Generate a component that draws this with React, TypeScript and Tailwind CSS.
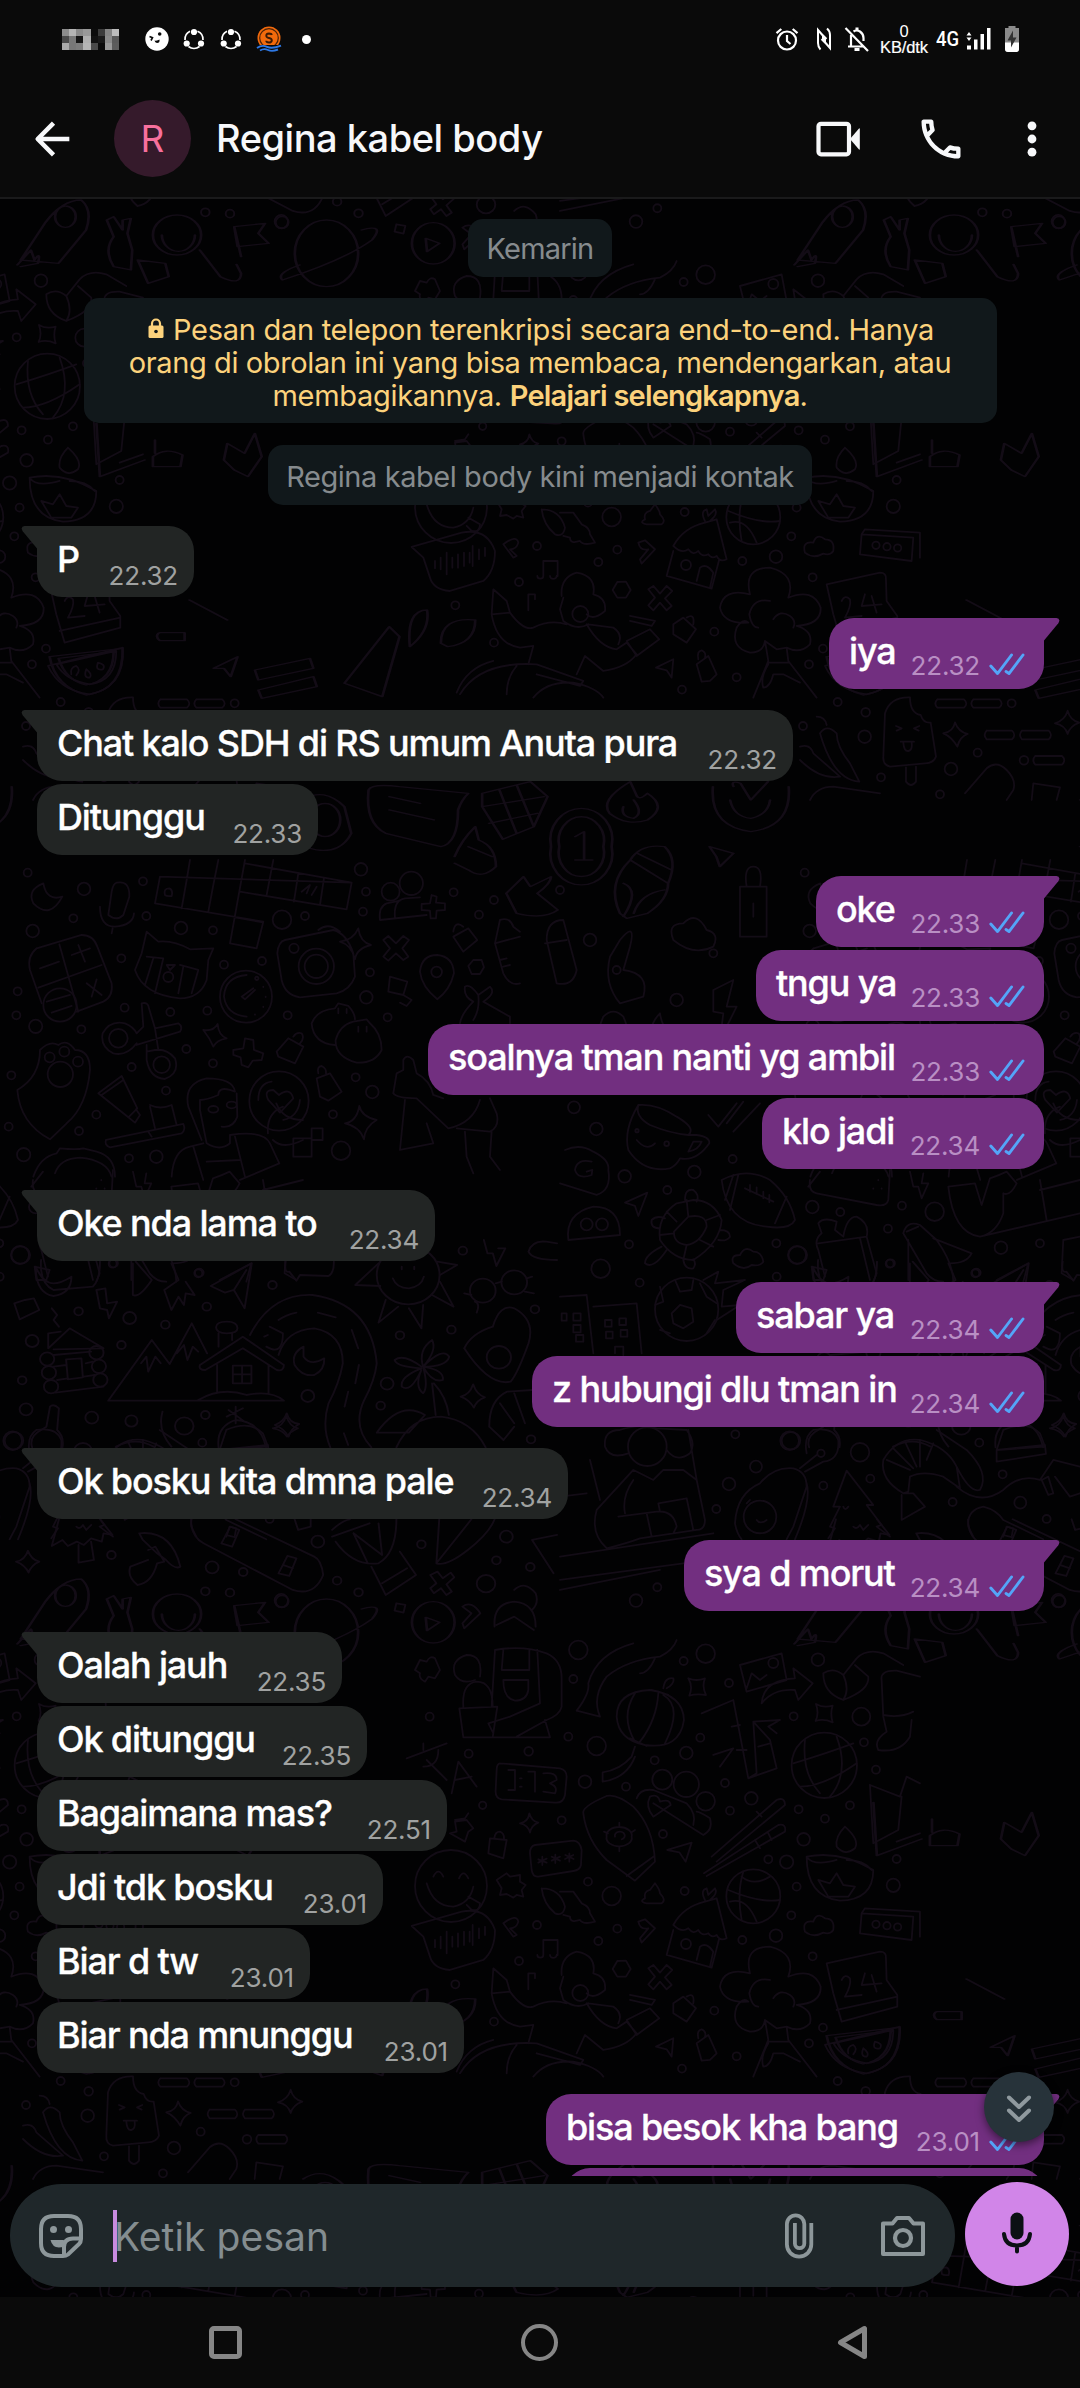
import type { ReactNode } from "react";

type Msg = { text: string; time: string; out?: boolean; tail?: boolean; width: string };

const messages: Msg[] = [
  { text: "P", time: "22.32", tail: true, width: "w-[157px]" },
  { text: "iya", time: "22.32", out: true, tail: true, width: "w-[215px]" },
  { text: "Chat kalo SDH di RS umum Anuta pura", time: "22.32", tail: true, width: "w-[756px]" },
  { text: "Ditunggu", time: "22.33", width: "w-[281px]" },
  { text: "oke", time: "22.33", out: true, tail: true, width: "w-[228px]" },
  { text: "tngu ya", time: "22.33", out: true, width: "w-[288px]" },
  { text: "soalnya tman nanti yg ambil", time: "22.33", out: true, width: "w-[616px]" },
  { text: "klo jadi", time: "22.34", out: true, width: "w-[282px]" },
  { text: "Oke nda lama to", time: "22.34", tail: true, width: "w-[398px]" },
  { text: "sabar ya", time: "22.34", out: true, tail: true, width: "w-[308px]" },
  { text: "z hubungi dlu tman in", time: "22.34", out: true, width: "w-[512px]" },
  { text: "Ok bosku kita dmna pale", time: "22.34", tail: true, width: "w-[531px]" },
  { text: "sya d morut", time: "22.34", out: true, tail: true, width: "w-[360px]" },
  { text: "Oalah jauh", time: "22.35", tail: true, width: "w-[305px]" },
  { text: "Ok ditunggu", time: "22.35", width: "w-[330px]" },
  { text: "Bagaimana mas?", time: "22.51", width: "w-[410px]" },
  { text: "Jdi tdk bosku", time: "23.01", width: "w-[346px]" },
  { text: "Biar d tw", time: "23.01", width: "w-[273px]" },
  { text: "Biar nda mnunggu", time: "23.01", width: "w-[427px]" },
  { text: "bisa besok kha bang", time: "23.01", out: true, tail: true, width: "w-[498px]" },
  { text: "", time: "", out: true, width: "w-[479px]" },
];

/* ---------- wallpaper ---------- */

const Dots = ({ list }: { list: number[][] }) => (
  <>
    {list.map(([x, y, r], i) => (
      <circle key={i} cx={x} cy={y} r={r} />
    ))}
  </>
);

const Paths = ({ list }: { list: string[] }) => (
  <>
    {list.map((d, i) => (
      <path key={i} d={d} />
    ))}
  </>
);

function Doodles() {
  return (
    <g id="doodles" fill="none" stroke="#130c16" strokeWidth="5.500" strokeLinecap="round" strokeLinejoin="round">
      <g transform="translate(400 1640) scale(.3333)">
        <Dots
          list={[
            [535, 30, 28], [520, 117, 12], [505, 290, 12], [590, 318, 28], [555, 425, 19], [678, 440, 12], [386, 334, 13], [206, 341, 12],
            [89, 230, 12], [851, 63, 12], [917, 41, 28], [987, 129, 12], [901, 293, 12], [859, 339, 19], [764, 361, 12], [975, 429, 12],
            [1054, 475, 19], [990, 512, 12], [789, 582, 12], [1254, 59, 19], [1181, 229, 12], [1384, 230, 27], [1392, 307, 12], [1428, 389, 12],
            [1275, 536, 12], [1350, 496, 12], [1196, 508, 12], [1211, 598, 19], [1105, 658, 12], [1160, 666, 20], [1190, 740, 12], [1490, 657, 12],
            [1480, 736, 20], [485, 541, 12], [248, 496, 11], [564, 725, 12], [635, 768, 28], [411, 855, 12], [652, 866, 12], [595, 903, 12],
            [357, 963, 12], [166, 1033, 12], [282, 1145, 12], [854, 753, 12], [1174, 826, 12], [1128, 887, 19], [1027, 900, 12], [1238, 949, 12],
            [1269, 1163, 12], [943, 1112, 12], [1010, 1249, 12], [846, 1286, 12], [1227, 1210, 12],
            [153, 738, 108], [787, 419, 30], [859, 433, 38], [917, 484, 28], [1273, 376, 98], [1060, 769, 81], [858, 912, 15],
            [1428, 853, 11], [1461, 857, 11], [1493, 861, 11], [1120, 69, 15], [541, 1059, 24],
          ]}
        />
        <Paths
          list={[
            "M275 200L285 30Q370 15 440 40Q485 60 485 115V200Q480 225 440 240L350 290M178 205L292 200L278 292H190ZM190 292H450L435 240M310 30L305 90H388V30M412 30L420 190L330 230L265 250L280 280M310 120H385V150Q380 182 345 182Q310 175 310 120M190 200Q185 130 230 125Q278 125 278 200M240 110Q250 45 200 45Q150 60 165 105Q185 135 225 120",
            "M530 212Q570 160 565 130Q590 40 700 10M530 212L600 230Q575 170 620 110Q680 60 780 50Q820 30 830 0M720 100Q745 100 765 55",
            "M750 150Q650 155 650 230Q655 300 735 315Q840 330 852 240Q850 165 750 150ZM705 160Q660 230 705 305M775 160Q770 240 720 305M790 165Q850 200 795 310M755 150L805 165M690 295L740 318M705 320L695 350Q660 390 608 397V425Q680 415 705 350M790 145Q795 110 820 115Q825 130 800 145",
            "M300 370L480 385Q500 390 500 410L495 465Q490 490 465 488L305 478Q285 475 287 450L290 390Q290 372 300 370M325 390L345 390V450H325M360 415h5M360 440h5M385 395H405V455M430 400Q470 395 470 420L450 430Q475 440 465 460L430 455",
            "M20 355L140 310M70 310V330M115 330Q115 380 70 380M80 360L140 420M155 460L175 365L230 440M165 420L215 410",
            "M620 468Q545 500 550 520Q560 600 620 660L705 722L765 665Q760 560 700 500Q650 460 620 468M680 708L760 650M620 590a38 25 0 1 0 75 0a38 25 0 1 0 -75 0M645 590a15 12 0 1 1 20 8M658 548v12M658 622v12M612 575l12 5M705 570l-12 8",
            "M405 615L520 602Q540 603 545 630L543 675Q540 690 520 693L415 710Q398 712 395 690L390 640Q390 618 405 615M427 650v25M415 658l25 10M440 656l-25 12M466 644v25M455 650l25 12M480 650l-25 12M508 640v25M496 645l25 12M520 645l-25 12",
            "M710 475Q720 445 760 450L860 490Q890 520 880 555M760 490L910 585Q940 570 930 535Q900 515 890 515M750 470Q775 460 780 485Q810 475 812 495L760 530Q735 500 750 470",
            "M802 630L875 608L857 665L838 637Z",
            "M935 650L1130 480Q1155 470 1155 495L950 665M912 700L1135 555Q1160 550 1155 575L920 708M1070 515L1085 530M1065 600L1080 625M1105 580L1115 600",
            "M905 220L1000 180L1045 415L1070 400L1060 245L1110 300L1130 385L1045 415M1060 245L1140 240L1105 260L1130 280M940 345L1000 325L960 380M995 260L1020 255M1010 330H1040M1075 320L1110 310",
            "M1020 75L1145 40L1160 120L1040 155ZM1040 145L1055 100L1080 120L1100 105M1085 190Q1090 120 1185 115L1180 85L1238 130L1195 180L1185 150Q1120 145 1085 190",
            "M1270 100Q1300 80 1330 105L1370 55Q1400 25 1450 40L1510 75M1330 105Q1350 150 1330 180Q1270 160 1270 100M1365 75L1405 110Q1410 150 1330 180",
            "M865 115Q890 125 915 115Q905 140 918 165Q890 160 868 167Q880 140 865 115M1248 192Q1270 205 1298 197Q1290 220 1298 247Q1270 235 1247 243Q1258 220 1248 192",
            "M1180 370Q1280 340 1360 310M1200 440Q1270 440 1370 370M1215 300Q1205 400 1260 460M1310 290Q1350 400 1290 470",
            "M1220 650Q1320 630 1420 690Q1420 780 1320 782Q1220 770 1220 650ZM1220 650Q1240 680 1310 660M1340 660Q1390 660 1415 690M1255 720L1290 730L1310 700L1330 735L1365 740L1345 770H1285ZM1335 560Q1380 600 1365 625Q1335 650 1310 620Q1305 590 1335 560",
            "M985 750Q1080 790 1140 780M1030 695Q1010 760 1025 840M1025 710Q1060 740 1110 710M990 785Q1040 770 1070 845",
            "M820 855Q850 800 915 785L950 775L980 895Q960 905 950 885Q935 895 925 880Q905 890 895 870Q880 885 865 865Q845 880 820 855M820 870L800 945L935 983L958 895M890 960L900 920Q920 905 940 935L930 980M915 780Q900 750 920 745L925 765L945 745Q955 760 930 780",
            "M1050 1000Q1030 920 1110 920Q1190 940 1165 1010Q1240 980 1262 1040Q1265 1090 1190 1095Q1240 1110 1230 1150Q1200 1180 1160 1160L1130 1165L1095 1140Q1090 1175 1050 1175Q990 1160 1010 1100Q1030 1070 1045 1085Q970 1090 960 1040Q970 980 1050 1000M1110 1020Q1060 1010 1048 1060Q1055 1100 1075 1100M1120 1075Q1140 1045 1170 1065Q1190 1080 1180 1100M1095 1140L1105 1200L1060 1310M1160 1160L1165 1200L1250 1310M1105 1205H1165M1105 1210Q1080 1250 1090 1280Q1110 1280 1120 1240L1150 1240L1200 1265",
            "M1280 970L1440 935Q1460 935 1458 955L1460 1020L1492 1065V1100L1325 1145L1300 1060ZM1310 1110L1492 1070M1325 1020Q1335 1000 1350 1015Q1355 1035 1335 1070L1385 1065M1395 1000L1385 1035L1445 1030M1415 1005L1430 1055",
            "M1275 1215L1500 1160Q1505 1280 1400 1300Q1310 1290 1275 1215M1300 1210L1480 1170Q1480 1260 1400 1270Q1330 1260 1300 1210M1345 1240Q1340 1220 1360 1215Q1375 1225 1360 1243M1390 1225Q1380 1250 1400 1250Q1410 1240 1390 1225M1425 1205Q1415 1230 1440 1225Q1450 1210 1425 1205",
            "M1385 820L1540 830L1535 900L1380 880ZM1385 820L1395 805L1560 815V890",
            "M1215 875Q1205 840 1240 845Q1250 815 1275 835Q1305 835 1300 870Q1290 885 1270 878Q1240 895 1215 875",
            "M425 745Q480 745 495 800Q490 830 465 820Q430 790 425 745M480 755L520 755L545 790Q570 800 570 820L585 845Q550 855 540 840Q510 850 510 830L490 825",
            "M735 775Q730 755 750 750L765 730Q780 750 780 760Q800 780 785 790H740Q715 785 735 775",
            "M745 985L760 975L780 998L800 975L817 990L795 1012L815 1035L800 1048L780 1025L760 1048L745 1033L765 1010ZM652 963L678 962L692 987L678 1010H652L638 987Z",
            "M290 720L320 700L330 710L360 705V725L377 735L365 750L370 770L350 765L340 773L320 762L300 765L305 745Z",
            "M35 858L185 815Q260 800 285 870Q285 930 250 960L150 990Q100 985 90 950L70 890ZM105 900v22M122 890v35M140 875v65M157 890v30M174 880v40M192 875v40M209 875v30M218 855v60M237 865v30M255 860v25M80 730Q100 800 160 800Q210 790 220 740M100 710Q115 680 130 710M177 715Q190 685 205 715M205 770L240 790Q240 815 215 810L200 795",
            "M310 850Q350 820 355 845Q350 865 330 865L350 885L340 890ZM715 845L735 838L765 865L725 908L720 895L745 865Q720 870 715 845M430 945V900H473V945M412 945a9 8 0 1 0 18 0M450 945a9 8 0 1 0 20 0M385 1048V1000H405V1015",
            "M275 1060L280 985L320 1020L330 1055ZM275 1060Q290 1150 360 1160L400 1155L385 1210M330 1055Q370 1110 400 1100Q450 1075 500 1090M485 1005Q480 950 530 935Q590 945 580 1000Q620 1010 615 1050Q580 1080 560 1060M490 1010L480 1045L490 1080Q530 1110 565 1090M560 1090Q600 1160 650 1165L680 1145L710 1180Q680 1220 610 1230L555 1185L530 1240M565 1090L640 1100Q670 1120 655 1150M690 1065L765 1080L755 1095L690 1080M680 1140L750 1105L778 1135L710 1185Z",
            "M180 1300Q240 1200 410 1210L550 1260L540 1275L410 1240M400 1310Q440 1260 520 1265Q590 1280 610 1310M320 1300Q320 1250 350 1215M170 1295Q200 1220 280 1200",
            "M820 1090L850 1070L888 1105L860 1145L820 1120ZM860 1070Q885 1055 880 1090M890 1210L925 1185L950 1240L930 1260L905 1262ZM895 1195Q890 1170 905 1168Q920 1175 915 1190M768 1220L820 1195L815 1250L800 1228Z",
            "M165 540L195 535L205 520M150 580L170 575L165 545L200 540L220 565L205 575L195 605ZM270 595L320 600L310 655L265 640ZM283 595Q285 575 300 575Q313 580 312 597M360 550Q385 545 388 520Q395 545 415 548Q395 555 390 578Q385 555 360 550",
            "M45 90L60 60L80 65Q90 45 105 55L120 90L105 115L85 110L75 125Q55 115 60 100ZM1445 120Q1440 90 1490 92L1560 110M1445 120L1450 230L1460 275Q1420 300 1435 330Q1500 340 1530 290L1535 240M1450 225Q1500 235 1540 215",
            "M1410 435L1500 470L1520 410M1410 435L1420 610L1495 570L1505 470M1520 410L1560 430M1490 605L1560 580",
          ]}
        />
      </g>

      <g transform="translate(0 860) scale(.3333)">
        <Dots
          list={[
            [83, 38, 12], [252, 87, 19], [220, 175, 12], [98, 213, 19], [429, 64, 12], [439, 168, 12], [543, 204, 19], [639, 211, 12],
            [364, 295, 12], [672, 314, 12], [786, 303, 12], [846, 179, 28], [915, 168, 12], [1083, 28, 19], [1098, 95, 12], [1089, 155, 12],
            [1361, 97, 12], [1437, 164, 12], [1482, 120, 12], [1110, 337, 12], [1099, 412, 19], [1163, 472, 12], [53, 394, 12], [49, 466, 12],
            [107, 499, 20], [374, 443, 12], [511, 456, 12], [244, 508, 12], [622, 452, 12], [863, 466, 12], [559, 567, 12], [639, 610, 12],
            [395, 621, 12], [498, 692, 12], [289, 764, 12], [237, 813, 12], [34, 646, 12], [26, 800, 12], [71, 884, 20], [387, 895, 12],
            [469, 890, 19], [1067, 652, 12], [1117, 696, 19], [999, 763, 12], [1023, 872, 28], [1310, 336, 16],
            [180, 435, 50], [738, 410, 78], [949, 319, 53], [949, 319, 35], [882, 265, 14], [355, 535, 28], [485, 614, 25], [837, 723, 89],
            [181, 643, 38], [149, 592, 15], [193, 575, 15], [234, 605, 15], [1172, 95, 27], [1234, 70, 35], [505, 351, 15],
          ]}
        />
        <Paths
          list={[
            "M130 70Q80 90 100 130Q150 180 187 110Q140 125 130 70M350 68Q390 60 388 110L370 165Q350 185 325 165L335 95Q340 70 350 68M300 140Q300 200 345 200Q400 195 402 160M338 205L335 220",
            "M480 50L1055 68M480 50L465 130L790 185L770 265L690 250L735 0M560 60L545 145M640 75L625 155M570 0L560 60M655 0L640 75M735 10L1055 68L1040 148L720 95M820 0L800 105M895 40L882 125M972 55L960 135M705 172L788 187M495 105Q490 85 508 85Q520 90 515 108Q500 110 495 105M905 95L930 75L920 100M935 105L950 80",
            "M110 265L245 225Q280 225 292 260L335 370Q340 410 310 425L230 455M110 265Q80 290 90 330L125 430M178 253L235 455M115 383L305 315M120 325L177 305M215 285L270 265M235 255L255 305M260 370L305 405M290 358L275 410M140 425L210 405M155 458L215 438",
            "M440 215L475 245Q520 240 570 268L640 265L625 300L620 360Q600 415 540 415Q430 405 405 330L425 280ZM440 290L490 295L465 400M460 295L435 375M540 315L595 330L575 400M550 320L535 400M500 315L525 315L510 330Z",
            "M855 240L1000 210Q1040 220 1060 280L1065 350Q1050 390 1010 400L900 412Q855 405 845 360L832 280Q835 245 855 240M955 210Q985 185 1020 215M1020 245Q1060 240 1075 205Q1080 245 1113 255Q1070 265 1065 298Q1055 255 1020 245",
            "M1150 240L1165 228L1188 250L1210 228L1227 240L1207 265L1225 290L1210 300L1188 280L1165 302L1150 290L1170 265ZM1405 318L1420 300H1445L1452 322L1440 342H1415Z",
            "M1260 335Q1265 285 1312 285Q1360 290 1362 340Q1350 390 1312 418Q1265 380 1260 335M1170 350L1222 365L1210 405L1165 395ZM1210 405L1235 420L1220 438L1200 428M1360 230L1405 205L1432 240L1390 275ZM1360 215Q1365 180 1390 200",
            "M1140 180L1280 165M1185 175Q1180 120 1215 115L1260 112M1140 180Q1135 140 1160 130L1200 122M1295 105L1310 110L1308 128L1335 130V150L1310 152L1308 175H1292L1290 152L1265 150V132L1290 130Z",
            "M760 385L725 410L735 418L765 390M770 360a5 5 0 1 1 1 0M790 380v1M797 410v1M790 440v1M765 463v1M740 345Q675 350 672 410Q680 465 740 470",
            "M425 430Q445 425 447 445L465 505L535 490Q550 500 540 515L410 555M425 430L430 500L410 520M410 550Q380 590 340 580Q300 560 308 520Q330 480 375 490Q400 500 410 520M440 555L440 600Q450 655 495 657Q540 640 525 595Q500 565 465 570L440 575M465 505L475 570",
            "M610 510Q640 515 653 492Q655 525 680 535Q650 540 640 560Q630 535 610 510M700 570L730 565L735 535L760 540L762 570L790 580L785 600L758 602L745 622L725 615L722 592L700 585ZM830 575L865 535L910 560L885 610L835 590ZM880 530Q890 515 905 520Q915 535 900 550",
            "M1005 555Q940 550 935 490Q950 450 1005 445L1015 430L1045 438Q1065 460 1065 478M1060 485L1100 478L1110 490Q1145 520 1145 570Q1125 610 1070 608Q1005 590 1007 540Q1020 495 1060 485M1015 445v15M1040 447v12M1075 500v15M1100 500v15",
            "M150 838Q60 790 52 690Q120 650 120 570Q150 540 175 555Q200 535 225 570Q270 570 270 630Q260 740 200 790ZM295 700L365 648L412 745L385 772ZM305 705L370 660M385 772L405 788L420 765L408 748M318 840L550 792Q558 810 545 820L330 862Q312 855 318 840M445 815L455 830M450 735Q480 750 515 735L530 795M450 740L465 805",
            "M565 740Q550 670 620 655Q700 655 705 695L690 690Q655 680 655 705Q620 720 600 720V750L620 850Q660 875 690 850V825M565 740L605 840M625 748a15 10 0 1 0 30 0a15 10 0 1 0-30 0M680 735a15 10 0 1 0 30 0a15 10 0 1 0-30 0M710 700L712 770Q700 805 665 800M515 950Q520 870 570 860L610 850M690 825Q790 810 810 850L838 910L720 960M580 860L610 960M620 905L720 900M705 830L735 950",
            "M805 720Q790 690 820 690L837 705Q870 680 880 715L840 758ZM775 720Q775 670 815 665M900 720Q895 770 850 780M880 835H935V890H880ZM935 805H968V840H935ZM1035 790Q1070 785 1078 738Q1085 770 1130 780Q1095 800 1092 838Q1080 800 1035 790M950 655L990 640L1025 695L985 722L960 710ZM955 640Q950 620 965 618Q980 625 978 640",
            "M100 950Q120 890 170 880L180 865Q230 870 250 865L290 875Q345 890 345 950M165 940Q180 895 240 893Q320 900 335 950",
            "M1395 380Q1410 370 1435 405L1470 380Q1490 400 1450 425L1530 470V490M1435 405Q1440 450 1420 480M1395 380Q1390 410 1420 425Q1385 460 1380 490M1180 700L1190 640L1210 630V600Q1220 580 1240 600L1250 640Q1290 660 1300 705L1330 715M1180 700Q1190 715 1250 715L1345 805Q1420 790 1440 720M1215 720L1200 870L1300 850L1280 790M1370 805L1470 815Q1500 800 1490 760L1470 715M1395 815L1400 890L1420 940M1475 815L1470 890L1500 930",
            "M1485 250L1500 180Q1530 170 1540 200L1560 215M1485 250L1510 340Q1530 380 1560 370M1485 250L1560 230M1500 300L1520 295M1510 320L1530 315",
          ]}
        />
      </g>

      <g transform="translate(560 1100) scale(.3333)">
        <Dots
          list={[
            [109, 87, 19], [42, 22, 18], [194, 229, 19], [322, 270, 12], [403, 216, 19], [518, 177, 12], [207, 433, 12], [239, 548, 12],
            [122, 506, 28], [757, 321, 19], [841, 336, 12], [711, 465, 27], [649, 430, 12], [1026, 317, 12], [1124, 335, 28], [984, 386, 12],
            [989, 491, 12], [1323, 443, 19], [1440, 430, 12], [1246, 520, 12], [689, 1022, 28], [526, 1003, 12], [588, 1100, 18], [507, 1152, 19],
            [469, 1227, 12], [900, 1057, 28], [790, 1157, 12], [931, 1136, 12], [1178, 1206, 12], [1258, 1028, 12], [1328, 1123, 12], [1381, 1208, 18],
            [1460, 1257, 12], [228, 1502, 19], [292, 1462, 12], [1495, 1502, 20], [650, 530, 12],
            [380, 628, 95], [600, 1251, 49], [80, 373, 18], [126, 373, 18], [262, 1040, 58], [783, 1060, 11], [231, 92, 5], [320, 131, 7],
          ]}
        />
        <Paths
          list={[
            "M235 15Q290 10 350 50Q410 85 385 105Q330 100 270 75Q225 50 235 15M235 15Q190 90 205 150Q250 220 330 205Q350 195 360 175Q410 185 448 130Q450 110 410 105L385 105M385 155L400 125L425 125Q415 150 385 155M230 120Q260 155 285 130M445 45L475 80L530 10M500 70L550 5M520 95L600 10",
            "M15 150Q60 130 100 155Q150 180 145 210Q155 270 110 285L0 250M95 185Q50 175 45 210Q55 240 95 225L97 210L80 215",
            "M25 420Q15 340 100 320Q180 320 180 405ZM195 308L262 278L235 348L225 318Z",
            "M400 300Q460 300 485 360Q480 430 400 480Q340 480 300 420Q290 350 350 310ZM385 350Q440 340 440 380Q420 430 380 435Q340 430 342 395ZM380 300L385 350M440 360L480 345M420 420L460 440M380 435L370 480M342 400L300 405M350 365L320 335M375 300Q375 265 400 270Q420 285 410 305M300 385Q270 385 275 360Q290 345 315 355M320 450Q280 510 255 490Q255 465 305 440M370 480Q375 510 400 505Q410 490 400 478M480 390Q510 390 510 410Q500 425 475 420",
            "M485 240Q560 200 630 240Q690 290 705 360Q690 390 620 380Q500 370 485 240ZM510 330L535 225M555 265L640 305M645 370L680 290M570 255v20M590 262v20M610 275v20M628 285v22M495 300L520 225",
            "M520 490Q510 465 540 465Q555 435 580 455Q605 455 610 485Q600 500 575 495Q550 515 520 490M775 370Q790 350 830 365L825 390L850 410Q860 350 890 350Q930 370 920 410L950 520L940 545M775 370L785 400Q760 420 775 450L795 530M775 430L920 410M900 415L930 540",
            "M1030 400Q1040 360 1080 375L1130 420Q1180 490 1180 545M1030 400L1100 520Q1120 545 1150 545M1045 420V540M1120 415L1235 460Q1220 490 1170 490M1040 395L1075 380",
            "M745 260L780 215M990 210L985 300Q980 320 950 315L770 280Q745 275 750 240M955 240v1M965 265v1M940 265v1M1050 215L1060 260H1075L1085 295L1105 250L1085 250L1090 220M1165 260Q1180 400 1260 410L1560 340M1165 260L1245 250L1265 315L1290 235Q1320 225 1340 215L1370 250Q1350 290 1330 280L1330 340Q1310 400 1260 410M1440 240L1460 360M1440 270L1560 240",
            "M345 540L360 575L395 570L400 540M335 640L360 615L395 625L400 665L370 685L340 670ZM285 615L310 605L300 560M470 610L440 590L420 550M300 690L330 700M440 700L465 660M430 540L475 515L465 550L555 540L490 570L485 620L540 615L470 660",
            "M0 590L80 585L100 760M100 620L230 610L245 760M40 640h22v22h-22zM5 640h15v22h-15zM40 675h22v22h-22zM48 705h22v20h-22zM135 660h20v20h-20zM178 655h20v20h-20zM138 695h20v20h-20zM182 690h20v20h-20zM165 760V740H190V765",
            "M205 1060Q150 1080 135 1040Q130 990 180 990Q240 970 290 985L380 990Q410 1030 390 1060Q350 1090 320 1050M220 1110L110 1230Q90 1300 140 1345Q200 1330 240 1315L410 1290Q435 1290 435 1260L410 1140L370 1110L310 1110L280 1140L240 1120ZM385 990L410 1140M195 1240Q185 1190 220 1140M175 1250L290 1235Q340 1230 350 1280L340 1300M300 1235L295 1210L380 1195L400 1290M260 1240L275 1310M90 1080L120 1200M0 1190L80 1180M0 1370L460 1300M0 1440L370 1390M0 1470L300 1410",
            "M525 1270Q530 1180 600 1150Q640 1100 700 1105Q740 1115 740 1160L700 1280L680 1318M525 1270Q530 1300 545 1318M740 1150Q755 1200 705 1318M560 1210L570 1200M590 1260Q600 1275 620 1260M720 1105L770 1065M740 1060Q730 1010 760 990Q820 980 835 1020Q840 1080 790 1085L735 1115",
            "M860 1112L940 1215L920 1215L965 1275L950 1280L990 1310M860 1112L820 1220L840 1220L810 1280L825 1285L805 1315M850 1220Q855 1235 865 1220M880 1280Q890 1290 900 1275L910 1290L925 1275",
            "M1030 1180Q960 1140 970 1080Q1010 1010 1080 1020Q1160 1040 1190 1100L1200 1165L1150 1130Q1090 1110 1050 1130L1045 1175ZM980 1080L1050 1110M1000 1045L1060 1105M1035 1025L1070 1100M1080 1020L1080 1100M1120 1030L1100 1080M1025 1185L1025 1260L1060 1240L1095 1220L1060 1180L1030 1180M1190 1100Q1230 1180 1260 1170Q1290 1120 1220 1050L1130 990",
            "M1310 1050L1330 990Q1400 960 1440 1000L1455 1040ZM1310 1050L1455 1035L1458 1062L1310 1085ZM1470 985Q1500 980 1510 948Q1520 980 1545 985Q1515 1000 1512 1010Q1500 990 1470 985M1190 1160Q1260 1220 1330 1170Q1380 1120 1440 1140L1480 1080L1560 1100M1445 1140L1465 1185L1480 1180L1465 1130ZM1485 1130L1530 1190L1560 1180M1225 1280Q1220 1230 1270 1220Q1310 1230 1330 1260L1450 1318M1240 1310L1225 1280M1330 1310L1340 1280L1360 1285L1355 1310",
            "M755 500L800 510L790 540L760 540ZM1405 490L1310 540M1405 490L1390 545M1510 420L1560 410M1510 420L1505 520L1540 540M1455 100Q1450 40 1500 20M1470 120Q1500 150 1560 120M1480 10Q1500 60 1560 60M1450 740Q1500 770 1500 700L1460 680",
          ]}
        />
      </g>

      <g transform="translate(800 600) scale(.3333)">
        <Dots
          list={[
            [113, 306, 12], [197, 337, 13], [194, 410, 19], [9, 378, 12], [243, 532, 12], [420, 583, 12], [453, 507, 19], [533, 458, 12], [635, 310, 12], [672, 481, 13],
          ]}
        />
        <Paths
          list={[
            "M255 340Q270 290 330 292Q330 340 362 345Q370 370 392 368L408 470Q400 490 375 490L270 500Q248 495 250 470ZM318 502V545Q333 565 348 545V500M288 378L305 385L290 392M358 378L342 385L356 392M302 425H342M310 428Q312 455 325 453Q338 450 335 428",
            "M412 298H492Q506 311 492 323H412Q400 311 412 298M520 298H598Q612 311 598 323H520Q508 311 520 298M560 392H636Q650 405 636 418H560Q548 405 560 392M666 392H746Q760 405 746 418H666Q654 405 666 392M706 468H786Q800 481 786 494H706Q694 481 706 468",
            "M430 400Q460 395 465 367Q475 395 503 402Q480 410 472 440Q455 410 430 400M765 370Q795 360 803 332Q810 360 838 368Q810 378 803 402Q795 375 765 370",
            "M60 400Q80 370 110 400Q110 440 150 490L178 545Q100 540 60 400M80 375Q75 350 50 350M0 440Q30 430 40 460L120 530Q60 540 0 480M495 580L560 505Q590 480 620 510Q650 540 640 570L620 600M700 550L780 562L770 600M700 550L695 600M30 600Q50 560 100 560L240 580",
          ]}
        />
      </g>

      <g transform="translate(0 200) scale(.6888 .3333)" strokeWidth="4">
        <Paths
          list={[
            "M30 180L65 70Q90 0 118 0Q135 30 125 90L85 190ZM80 50a15 32 0 1 0 30 0a15 32 0 1 0-30 0M25 195L45 150L50 180Q60 150 55 190L30 200",
            "M155 60L165 110Q150 150 165 200L190 210L192 150L185 100L190 55L178 60L178 90L165 50ZM222 105a35 60 0 1 0 70 0a35 60 0 1 0-70 0M235 105a22 45 0 1 0 48 0M200 180L240 190L245 230L215 250ZM290 150L320 230Q350 260 350 220Q340 180 345 200",
            "M340 80L385 70L375 100L390 130L345 140ZM340 80L350 170M428 160a46 100 0 1 0 92 0a46 100 0 1 0-92 0M525 90Q560 70 540 120Q500 180 410 240Q400 220 435 195M598 130a30 60 0 1 0 62 0a30 60 0 1 0-62 0M618 115L638 130L620 155Z",
            "M610 620Q590 640 620 640M325 780L330 730L355 760L370 700L380 770L360 830L340 810ZM140 670L145 830L210 780M222 770Q240 740 265 765L262 800H222ZM225 720V760",
          ]}
        />
      </g>

      <g transform="translate(0 600) scale(.6888 .3333)" strokeWidth="4">
        <Paths
          list={[
            "M535 570Q540 550 580 560L680 580Q670 600 665 630Q665 730 640 740L560 700Q530 670 535 570M565 590L610 610M565 630L630 660",
            "M700 580L770 545L795 590L775 680L730 718L700 620ZM700 620L790 590M725 570L750 700M750 555L775 680M710 670L780 640",
            "M915 545Q870 600 885 640Q910 680 940 660Q970 620 940 580Q930 600 925 590ZM905 620Q900 650 920 655Q935 640 920 600",
            "M800 740a45 95 0 1 0 88 0a45 95 0 1 0-88 0M812 740a33 72 0 1 0 64 0a33 72 0 1 0-64 0M835 710L848 695V780M835 780H860",
            "M1035 560Q1030 680 1090 695Q1150 680 1145 560M1060 600Q1065 650 1090 655Q1115 645 1118 600M1065 560Q1060 540 1075 550L1090 600L1115 545",
            "M900 940Q880 850 915 780Q930 730 965 740Q985 780 970 850Q970 900 940 940L910 955ZM915 780L970 850M925 760L975 810M905 850Q930 870 905 950M965 870Q930 880 920 940",
            "M660 770Q670 720 690 680L695 720Q720 740 720 800Q700 840 680 810L660 790M680 740L715 770M735 880L760 830L770 860L800 830Q800 850 780 880L810 930Q790 960 750 940Z",
            "M1030 740L1065 760L1045 800L1040 770ZM275 0L330 60M500 250L565 80L580 110L555 290ZM595 140Q590 30 620 30Q625 90 595 140M640 130Q640 50 690 60Q690 130 650 140Z",
            "M440 600Q470 560 500 620L510 700Q495 760 460 750L440 740M450 660a20 45 0 1 0 44 0a20 45 0 1 0-44 0",
            "M230 100Q225 110 232 122H268V98H232ZM370 210L450 175L455 205L375 240ZM375 270L455 230L460 260L380 295ZM310 205L345 170L335 230L325 205Z",
            "M72 170L178 145Q180 270 125 285Q80 260 72 170M85 175L165 155Q165 240 125 255Q95 240 85 175",
          ]}
        />
      </g>

      <g transform="translate(0 1240) scale(.3571 .3333)">
        <Dots
          list={[
            [58, 45, 26], [318, 70, 12], [558, 98, 12], [763, 135, 12], [579, 200, 12], [220, 214, 12], [363, 234, 18], [463, 254, 12],
            [340, 315, 12], [90, 303, 18], [62, 421, 12], [73, 508, 18], [39, 602, 26], [257, 533, 18], [368, 543, 17], [516, 558, 26],
            [575, 525, 12], [862, 468, 18], [1084, 431, 18], [1066, 497, 12], [1120, 286, 12], [1264, 269, 12], [1296, 32, 12], [1498, 208, 12],
            [1487, 598, 12], [312, 945, 12], [594, 982, 18], [681, 996, 12], [575, 1054, 12], [644, 1058, 12], [790, 1084, 18], [890, 905, 18],
            [944, 1022, 12], [1004, 1057, 12], [1180, 913, 12], [1390, 961, 12], [1361, 1031, 26], [1418, 890, 18], [1485, 981, 12],
            [1143, 105, 88], [1352, 152, 36], [1440, 127, 36], [1397, 352, 34], [132, 357, 20], [137, 398, 20], [143, 440, 20],
            [270, 338, 20], [277, 379, 20], [281, 420, 20],
          ]}
        />
        <Paths
          list={[
            "M100 80Q100 160 150 168Q200 160 200 110Q170 130 150 130Q120 130 100 80M115 60Q110 130 150 150L260 140Q280 120 280 65M372 70V165Q390 175 425 120M425 120L380 65M480 70L500 120L460 150L480 210L500 170L515 195L520 160L545 165L520 125",
            "M590 138L705 70L685 205L655 150L630 158ZM655 150L690 90M800 65Q795 100 810 95L830 122L840 105L920 108Q935 100 935 65",
            "M1060 70L995 135L1065 138M1080 180L1060 248L1115 200M1145 205L1180 265L1185 195M1210 165L1270 200L1232 125M1225 65L1280 75L1232 105M1100 115Q1110 145 1145 145Q1180 140 1187 110M1125 80v8M1160 80v8M1388 130L1405 125M1320 165L1300 160M1330 185Q1345 190 1335 218M1470 155L1495 160M1475 115L1490 110",
            "M700 285Q760 160 875 165Q1040 190 1055 370Q1050 420 1020 480Q985 560 1040 622M740 290L750 285M780 345Q800 270 880 265Q960 280 960 370Q950 430 920 490Q900 560 925 622M780 240Q800 225 830 218M890 218L940 232M985 270L1003 325M1005 375L995 430M975 455L965 500M963 580L975 615",
            "M303 482L425 300L475 372L537 250L580 340M303 482H795M395 370L410 350L415 395L435 350L450 370M495 340L515 315L525 360L540 320L555 335M560 375L680 290L795 375Q795 395 775 390L680 325L575 390Q555 390 560 375M608 375V455M752 375V460M652 377h52v53h-52zM678 377V430M652 403H704M612 280V320M650 280V300M605 262Q605 245 635 245Q665 245 665 265Q665 280 635 280Q605 280 605 262M555 480Q620 440 690 465Q760 450 795 482",
            "M135 325L195 265L290 325L150 328M135 325V280L170 275M150 345L255 335M150 380L185 375M160 420L190 415M240 370L260 365M235 410L265 405M155 458L290 440M185 358L228 355L232 412L190 418ZM145 205L160 225L150 240L165 260",
            "M850 320Q815 340 825 375Q845 410 880 405Q910 390 908 355Q870 380 850 350ZM1185 380Q1170 330 1210 300Q1225 330 1185 380Q1240 320 1258 350Q1250 380 1185 380Q1245 390 1240 420Q1210 430 1185 380Q1200 440 1185 460Q1160 440 1180 390Q1150 460 1125 440Q1120 410 1180 385Q1110 380 1105 360Q1130 340 1180 380M1210 430L1220 525M1215 430Q1250 470 1257 525M1055 578Q1120 480 1190 525L1145 578ZM1110 622Q1150 530 1235 530Q1320 540 1360 622",
            "M1300 325Q1320 280 1380 260Q1400 190 1440 205Q1500 240 1480 310Q1450 400 1430 425Q1370 440 1300 325M1370 560Q1370 480 1420 455L1490 450M1370 560L1410 600L1440 560M1400 490L1440 550M1440 460L1470 550",
            "M1290 470Q1315 465 1325 433Q1335 465 1358 472Q1335 480 1327 503Q1315 480 1290 470M770 555Q795 545 803 520Q810 550 838 552Q815 565 808 590Q795 565 770 555M45 965Q70 960 78 932Q88 960 110 965Q88 975 80 998Q70 975 45 965",
            "M90 622Q80 590 115 570L130 560L140 500Q150 490 165 505L160 570Q180 590 175 622M455 515Q440 570 480 620M612 622Q605 560 660 540Q730 545 745 622M635 530L680 505M660 500V550M640 510L685 545M325 620Q380 590 430 620",
            "M165 838L145 918L175 900L190 918L215 905L235 915L255 895L285 905L290 880L315 885L280 838M220 915V968L263 960L255 905M390 880Q480 870 505 980Q490 990 465 960L440 940L400 900ZM415 930L435 920L460 965L440 970Q425 1030 385 1035Q355 1010 365 980L415 960",
            "M535 838Q535 890 570 910L820 1050Q880 1070 905 1005Q900 960 880 950L660 838M620 910L645 860L670 870L650 920ZM632 885L660 892M780 1000L805 948L830 955L810 1008ZM792 975L820 985",
            "M930 870Q960 840 980 838M930 890L1035 850M940 905Q990 980 1060 970Q1110 940 1110 838M990 880L1030 970M990 880L1070 945L1060 850M1040 980L1080 1065L1165 1005L1120 935M1070 1030L1140 985M825 838L835 870L870 860V838",
            "M1230 838L1222 970Q1250 980 1310 930Q1370 880 1385 838M1222 970L1320 838M1490 900L1560 885M1490 900L1550 1000M1205 1005L1225 995L1240 1015L1262 998L1272 1012L1250 1033L1265 1055L1250 1065L1235 1045L1215 1060L1205 1045L1222 1030ZM1110 1090L1135 1095L1130 1118L1105 1112Z",
            "M270 150L295 145L300 190L328 185L305 235L300 210L280 205ZM40 190L70 180L95 175L110 210L55 238ZM1355 0L1365 40H1380L1390 78L1415 25H1395M1480 35Q1490 0 1530 5L1560 10M1480 35Q1490 60 1560 60",
            "M1440 1050Q1470 1020 1500 1060Q1510 1090 1490 1110M1385 1160Q1380 1090 1440 1085Q1500 1090 1500 1160M1390 1155L1440 1130L1495 1170M1295 1100Q1320 1080 1345 1120L1300 1165L1295 1150L1320 1120Z",
          ]}
        />
      </g>

      <g transform="translate(540 860) scale(.3333)">
        <Dots list={[[60, 90, 12], [150, 240, 19], [230, 330, 12], [410, 420, 19], [520, 280, 12], [330, 600, 12], [90, 560, 19], [470, 640, 12]]} />
        <Paths
          list={[
            "M20 240Q20 180 70 180L110 330Q100 380 50 370ZM15 250L80 240M210 290L240 240Q290 180 270 260L250 330Q330 340 310 410L240 430Q190 370 210 290",
            "M400 240Q380 190 430 190Q470 150 500 210Q540 220 520 260Q460 290 400 240M520 390L580 360L560 440H590L540 540L550 460L520 455ZM600 80h80v150h-80zM620 80Q610 20 640 20Q670 20 660 80M640 130v40",
            "M190 470Q150 560 220 590Q290 560 250 470Q220 440 190 470M360 460Q310 510 360 560Q420 580 430 530Q370 530 360 460M500 590Q560 560 600 620Q590 690 530 690Q480 660 500 590",
          ]}
        />
      </g>
    </g>
  );
}

function Wallpaper() {
  return (
    <svg className="absolute inset-0" width="1080" height="2388" viewBox="0 0 1080 2388">
      <defs>
        <Doodles />
      </defs>
      <use href="#doodles" />
      <use href="#doodles" x="777" />
      <use href="#doodles" x="-777" />
      <use href="#doodles" y="1379" />
      <use href="#doodles" x="777" y="1379" />
      <use href="#doodles" x="-777" y="1379" />
      <use href="#doodles" y="-1379" />
      <use href="#doodles" x="777" y="-1379" />
      <use href="#doodles" x="-777" y="-1379" />
    </svg>
  );
}

/* ---------- status bar ---------- */

const mosaic = [
  ["#8c8c8c", "#b4b4b4", "#8a8a8a", "#999999", "#0c0c0c", "#3c3c3c", "#858585", "#bdbdbd"],
  ["#4a4a4a", "#777777", "#141414", "#b0b0b0", "#121212", "#1a1a1a", "#8b8b8b", "#5a5a5a"],
  ["#a9a9a9", "#777777", "#7c7c7c", "#b5b5b5", "#4a4a4a", "#0c0c0c", "#9a9a9a", "#5c5c5c"],
];

function ShareRing() {
  return (
    <svg width="22" height="22" viewBox="0 0 22 22" fill="none" stroke="#fff" strokeWidth="1.700">
      <path d="M7 3.200A9 9 0 0 0 2 12M14.500 3.200A9 9 0 0 1 20 12M5.500 18.500A9 9 0 0 0 16.500 18.500" />
      <circle cx="11" cy="4" r="3.100" fill="#fff" stroke="none" />
      <circle cx="3.700" cy="15.500" r="3.100" fill="#fff" stroke="none" />
      <circle cx="18" cy="15.500" r="3.100" fill="#fff" stroke="none" />
    </svg>
  );
}

function StatusBar() {
  return (
    <div className="flex h-[78px] items-center pr-[61px] pl-[62px]">
      <div className="mt-[1px] grid w-[57px] grid-cols-8">
        {mosaic.flat().map((c, i) => (
          <span key={i} className="h-[7px]" style={{ background: c }} />
        ))}
      </div>
      <svg className="ml-[26px]" width="24" height="24" viewBox="0 0 24 24">
        <circle cx="12" cy="12" r="11.700" fill="#fff" />
        <path d="M4.500 9.500l3 1.200L6 13.500" stroke="#0a0a0a" strokeWidth="1.600" fill="none" />
        <circle cx="14.700" cy="7" r="1.800" fill="#0a0a0a" />
        <path d="M9.500 13.500q3 .500 5-1q.500 3.500-2.500 3.500q-2-.200-2.500-2.500" fill="#0a0a0a" />
      </svg>
      <span className="ml-[14px]"><ShareRing /></span>
      <span className="ml-[15px]"><ShareRing /></span>
      <svg className="ml-[14px]" width="26" height="26" viewBox="0 0 26 26" fill="none">
        <circle cx="13" cy="12" r="11.500" fill="#f26a0c" />
        <circle cx="13" cy="12" r="9.300" stroke="#4a2208" strokeWidth="1.200" />
        <path d="M15.800 9Q15.500 7.500 13 7.500Q10.300 7.600 10.300 9.700Q10.400 11.500 13 12Q15.900 12.500 15.800 14.500Q15.500 16.500 13 16.500Q10.300 16.400 10.200 14.800" stroke="#3a1a05" strokeWidth="1.900" />
        <path d="M0 19h26v7h-26z" fill="#0a0a0a" />
        <path d="M1 22q5-3.500 10-1.200t14-1.200M4 24.500q4-2.500 8-.500t10-.500" stroke="#2e78e4" strokeWidth="1.900" />
      </svg>
      <span className="ml-[20px] size-[9px] rounded-full bg-white" />

      <div className="ml-auto flex items-center">
        <svg width="24" height="24" viewBox="0 0 24 24" fill="none" stroke="#fff" strokeWidth="2.200">
          <circle cx="12" cy="13.500" r="9" />
          <path d="M12 8v6l3.500 3M1.500 6.200L6.300 2M22.500 6.200L17.700 2" />
        </svg>
        <svg className="ml-[17px]" width="16" height="24" viewBox="0 0 16 24" fill="none" stroke="#fff" strokeWidth="2">
          <path d="M4.500 22.500Q2 20 2 16V3L9 11V15.500L5.500 12M11 1.500Q14 4 14 8V21L7 13V8.500L10.500 12" />
        </svg>
        <svg className="ml-[12px]" width="26" height="26" viewBox="0 0 26 26" fill="none" stroke="#fff" strokeWidth="2.200">
          <path d="M1.500 2L24 25M7 9V20M4 20.500H19M9.500 5.500Q12.500 3.500 16 5.500Q19.500 8 19.500 12V15" />
          <path d="M13 1.500V4M10.500 23.500h5" strokeWidth="3" />
        </svg>
        <div className="ml-[9px] flex w-[50px] flex-col items-center font-['Liberation_Sans'] text-[16.500px] leading-[16px] text-white">
          <span>0</span>
          <span className="tracking-[-0.1px] [-webkit-text-stroke:0.2px_#fff]">KB/dtk</span>
        </div>
        <span className="ml-[7px] w-[24px] origin-left scale-x-[0.88] font-['Roboto'] text-[21px] leading-6 font-medium text-white">4G</span>
        <svg className="ml-[6px]" width="26" height="24" viewBox="0 0 26 24" fill="#fff">
          <path d="M.500 8.500L3 5l2.500 3.500zM.500 10.500h5L3 14zM1 18.500h4v4H1zM8 12.500h3.500v10H8zM14.500 7H18v15.500h-3.500zM21 1h3.500v21.500H21z" />
        </svg>
        <svg className="ml-[13px]" width="14" height="28" viewBox="0 0 14 28">
          <path d="M3.500 1h7v2H14v21q0 3-3 3H3q-3 0-3-3V3h3.500z" fill="#8b8b8b" />
          <path d="M0 17.500h14V24q0 3-3 3H3q-3 0-3-3z" fill="#fff" />
          <path d="M8 5.500L2.500 15.500H6V22.500L11.500 12.500H8z" fill="#333" />
        </svg>
      </div>
    </div>
  );
}

function Header() {
  return (
    <header className="relative h-[199px] shrink-0 border-b-2 border-[#1a1a1b] bg-[#0a0a0a]">
      <StatusBar />
      <div className="flex h-[121px] items-center pr-[22px] pl-[26px]">
        <svg width="52" height="52" viewBox="0 0 24 24" fill="none" stroke="#f7f8fa" strokeWidth="2.100">
          <path d="M20 12H5.500M12.700 4.700L5.400 12l7.300 7.300" strokeLinejoin="round" />
        </svg>
        <div className="ml-[36px] flex size-[77px] items-center justify-center rounded-full bg-[#351a2b] text-[37px] text-[#f7709d]">R</div>
        <h1 className="-mt-[2px] ml-[25px] text-[38px] leading-[50px] font-medium tracking-[-0.47px] text-[#f7f8fa]">Regina kabel body</h1>
        <svg className="ml-auto" width="52" height="52" viewBox="0 0 52 52">
          <rect x="6.500" y="10.800" width="30.500" height="30.500" rx="2.500" fill="none" stroke="#f7f8fa" strokeWidth="4.200" />
          <path d="M38 26L47 15.500q.800-.500.800.500v20q0 1-.800.500z" fill="#f7f8fa" />
        </svg>
        <svg className="ml-[51px]" width="52" height="52" viewBox="0 0 24 24" fill="#f7f8fa">
          <path d="M6.540 5c.06.890.210 1.760.450 2.590l-1.200 1.200c-.410-1.200-.670-2.470-.760-3.790h1.510m9.860 12.020c.850.240 1.720.390 2.600.450v1.490c-1.320-.090-2.590-.350-3.800-.750l1.200-1.190M7.500 3H4c-.550 0-1 .450-1 1 0 9.390 7.610 17 17 17 .550 0 1-.450 1-1v-3.490c0-.550-.450-1-1-1-1.240 0-2.450-.200-3.570-.570-.100-.040-.210-.050-.310-.050-.260 0-.510.100-.710.290l-2.200 2.200c-2.830-1.450-5.150-3.760-6.590-6.590l2.200-2.200c.280-.280.360-.670.250-1.020C8.700 6.450 8.500 5.250 8.500 4c0-.550-.450-1-1-1z" />
        </svg>
        <svg className="ml-[39px]" width="52" height="52" viewBox="0 0 52 52" fill="#f7f8fa">
          <circle cx="26" cy="12.800" r="4.400" />
          <circle cx="26" cy="26" r="4.400" />
          <circle cx="26" cy="39.200" r="4.400" />
        </svg>
      </div>
    </header>
  );
}

/* ---------- chat ---------- */

const Ticks = () => (
  <svg className="mt-[35px] ml-[9px]" width="36" height="24" viewBox="0 0 36 24" fill="none" stroke="#54a5f8" strokeWidth="2.900" strokeLinecap="round" strokeLinejoin="round">
    <path d="M1.800 13L8.500 20.500L22.500 2M17 18.500L20 20.500L34 2" />
  </svg>
);

function Bubble({ m, spaced }: { m: Msg; spaced: boolean }) {
  return (
    <div className={`flex ${spaced ? "mt-[21px]" : "mt-[3px]"} ${m.out ? "justify-end pr-[36px]" : "pl-[37px]"}`}>
      <div
        className={`relative flex h-[71px] items-start rounded-[25px] ${m.width} ${
          m.out ? "bg-[#722f80] pr-[19px] pl-[20px]" : "bg-[#222524] pr-[16px] pl-[20px]"
        } ${m.tail ? (m.out ? "rounded-tr-none" : "rounded-tl-none") : ""}`}
      >
        {m.tail &&
          (m.out ? (
            <svg className="absolute top-0 left-full" width="16" height="24" viewBox="0 0 16 24" fill="#722f80">
              <path d="M-1 0H12.500Q17 .800 14.300 5.200L0 22.500H-1z" />
            </svg>
          ) : (
            <svg className="absolute top-0 right-full" width="16" height="24" viewBox="0 0 16 24" fill="#222524">
              <path d="M17 0H3.500Q-1 .800 1.700 5.200L16 22.500H17z" />
            </svg>
          ))}
        <span className="text-[36px] leading-[66px] font-medium tracking-[-1.150px] whitespace-nowrap text-white [-webkit-text-stroke:0.3px_#fff]">{m.text}</span>
        {m.time && (
          <>
            <span
              className={`ml-auto text-[26px] leading-[30px] tracking-[-0.2px] ${m.out ? "mt-[33px] text-[#b98fc4]" : "mt-[35px] text-[#a0a2a1]"}`}
            >
              {m.time}
            </span>
            {m.out && <Ticks />}
          </>
        )}
      </div>
    </div>
  );
}

const Notice = ({ children, className }: { children: ReactNode; className: string }) => (
  <div className={`relative mx-auto rounded-[15px] bg-[#11181b] text-center text-[29px] whitespace-nowrap ${className}`}>{children}</div>
);

function Chat() {
  return (
    <main className="relative h-[1977px] shrink-0 overflow-hidden pt-[20px]">
      <Notice className="h-[58px] w-[144px] leading-[60px] tracking-[-0.8px] text-[#868b8e]">Kemarin</Notice>
      <Notice className="mt-[21px] h-[125px] w-[913px] pt-[15px] leading-[33px] tracking-[-0.3px] text-[#fcd27c]">
        <p className="flex justify-center pl-[2px] tracking-[-0.280px]">
          <svg className="mt-[5px] mr-[9px]" width="16" height="21" viewBox="0 0 16 21">
            <path d="M4 8V5.500a4 4 0 0 1 8 0V8" fill="none" stroke="#fcd27c" strokeWidth="2.200" />
            <rect x=".500" y="7.500" width="15" height="12.500" rx="1.500" fill="#fcd27c" />
            <circle cx="8" cy="13.500" r="1.800" fill="#11181b" />
          </svg>
          Pesan dan telepon terenkripsi secara end-to-end. Hanya
        </p>
        <p className="tracking-[-0.390px]">orang di obrolan ini yang bisa membaca, mendengarkan, atau</p>
        <p>
          membagikannya. <b className="font-semibold tracking-[-0.8px]">Pelajari selengkapnya</b>.
        </p>
      </Notice>
      <Notice className="mt-[22px] h-[60px] w-[544px] leading-[63px] tracking-[-0.430px] text-[#868b8e]">
        Regina kabel body kini menjadi kontak
      </Notice>
      {messages.map((m, i) => (
        <Bubble key={i} m={m} spaced={i === 0 || !!m.out !== !!messages[i - 1].out} />
      ))}
    </main>
  );
}

/* ---------- composer and navigation ---------- */

function Composer() {
  return (
    <div className="relative flex h-[121px] shrink-0 items-start pl-[10px]">
      <div className="absolute top-[-104px] left-[984px] flex size-[70px] items-center justify-center rounded-full bg-[#27333a] shadow-[0_3px_8px_rgba(0,0,0,0.5)]">
        <svg className="mt-[6px]" width="28" height="32" viewBox="0 0 28 32" fill="none" stroke="#8f999e" strokeWidth="4" strokeLinecap="round" strokeLinejoin="round">
          <path d="M4 3.500l10 9.500L24 3.500M4 16.500l10 9.500L24 16.500" />
        </svg>
      </div>
      <div className="mt-[8px] flex h-[103px] w-[945px] items-center rounded-full bg-[#1f272a] pr-[29px] pl-[28px]">
        <svg width="46" height="46" viewBox="0 0 46 46" fill="none" stroke="#8d979a" strokeWidth="4">
          <path d="M16 3H30Q43 3 43 16V26Q43 29 41 31L30 41.500Q28 43 25 43H16Q3 43 3 30V16Q3 3 16 3Z" />
          <path d="M43 25.500H35Q26 25.500 26 34V43" />
          <circle cx="15.500" cy="16.500" r="3.500" fill="#8d979a" stroke="none" />
          <circle cx="30.500" cy="16.500" r="3.500" fill="#8d979a" stroke="none" />
          <path d="M12.500 27H25Q29 27 26 33.500Q15 37 12.500 27Z" fill="#8d979a" stroke="none" />
        </svg>
        <span className="ml-[29px] h-[52px] w-[4px] bg-[#c88be0]" />
        <span className="mt-[2px] -ml-[3px] text-[39px] leading-[48px] tracking-[0.1px] text-[#848d90]">Ketik pesan</span>
        <svg className="ml-auto" width="30" height="46" viewBox="0 0 30 46" fill="none" stroke="#8d979a" strokeWidth="3.800">
          <path d="M27.300 10V31.500A12.200 12.200 0 0 1 2.900 31.500V11A8.700 8.700 0 0 1 20.300 11V30.500A4.700 4.700 0 0 1 10.900 30.500V10" />
        </svg>
        <svg className="ml-[66px]" width="46" height="42" viewBox="0 0 46 42" fill="none" stroke="#8d979a" strokeWidth="4" strokeLinejoin="round">
          <path d="M3 8.500H12.500L17 3H29L33.500 8.500H43V39H3Z" />
          <circle cx="23" cy="23" r="8" strokeWidth="4.200" />
        </svg>
      </div>
      <div className="mt-[6px] ml-[10px] flex size-[104px] items-center justify-center rounded-full bg-[#d185e8]">
        <svg className="-mt-[2px]" width="32" height="44" viewBox="0 0 32 44" fill="none" stroke="#0b1014" strokeWidth="4" strokeLinecap="round">
          <rect x="9.500" y="1.500" width="13" height="27" rx="6.500" fill="#0b1014" stroke="none" />
          <path d="M3 23Q4 34.500 16 34.500Q28 34.500 29 23M16 35V40.500" />
        </svg>
      </div>
    </div>
  );
}

function NavBar() {
  return (
    <nav className="relative grid h-[91px] shrink-0 grid-cols-3 place-items-center bg-[#0a0a0a] px-[68px]">
      <span className="size-[33px] rounded-[5px] border-[5px] border-[#868686]" />
      <span className="size-[37px] rounded-full border-[4px] border-[#868686]" />
      <svg className="-ml-[5px]" width="33" height="35" viewBox="0 0 33 35" fill="none" stroke="#868686" strokeWidth="5" strokeLinejoin="round">
        <path d="M28.500 3.500V31.500L4.500 17.500Z" />
      </svg>
    </nav>
  );
}

export default function App() {
  return (
    <div className="relative flex h-[2388px] w-[1080px] flex-col overflow-hidden bg-[#020203] font-['Inter',sans-serif]">
      <Wallpaper />
      <Header />
      <Chat />
      <Composer />
      <NavBar />
    </div>
  );
}
